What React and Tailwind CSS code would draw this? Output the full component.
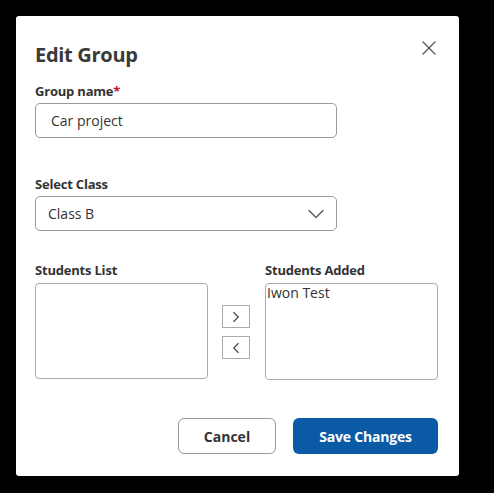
import { X, ChevronDown, ChevronRight, ChevronLeft } from 'lucide-react';

function Field({ label, required, children, className = '' }) {
  return (
    <div className={className}>
      <div className="text-[13px] leading-[16px] font-bold text-[#333] tracking-[-0.2px]">
        {label}
        {required && <span className="text-[#c8102e]">*</span>}
      </div>
      {children}
    </div>
  );
}

export default function App() {
  return (
    <div className="w-[494px] h-[493px] bg-black pt-4 pl-4 font-['Open_Sans',sans-serif]">
      <div className="relative flex flex-col w-[443px] h-[460px] bg-white rounded-[3px] px-[19px] pt-[27px] pb-[22px]">
        <h2 className="text-[20px] leading-[24px] font-bold text-[#3a3a3a] tracking-[-0.3px]">Edit Group</h2>
        <button className="absolute right-[18px] top-[20px] text-[#555]">
          <X size={24} strokeWidth={1.3} />
        </button>

        <Field label="Group name" required className="mt-[16px]">
          <div className="mt-[4px] w-[302px] h-[35px] flex items-center px-[15px] border border-[#999] rounded-[5px] text-[14px] text-[#333]">
            Car project
          </div>
        </Field>

        <Field label="Select Class" className="mt-[38px]">
          <div className="mt-[4px] w-[302px] h-[35px] flex items-center justify-between pl-[12px] pr-[6px] border border-[#999] rounded-[5px] text-[14px] text-[#333]">
            <span>Class B</span>
            <ChevronDown size={28} strokeWidth={1.1} className="text-[#555]" />
          </div>
        </Field>

        <div className="mt-[31px] flex items-start">
          <Field label="Students List" className="w-[173px]">
            <div className="mt-[5px] h-[96px] border border-[#aaa] rounded-[4px]" />
          </Field>
          <div className="flex flex-col gap-[8px] ml-[14px] mr-[15px] mt-[43px]">
            <button className="w-[28px] h-[23px] border border-[#aaa] flex items-center justify-center text-[#444]">
              <ChevronRight size={18} strokeWidth={1.5} />
            </button>
            <button className="w-[28px] h-[23px] border border-[#aaa] flex items-center justify-center text-[#444]">
              <ChevronLeft size={18} strokeWidth={1.5} />
            </button>
          </div>
          <Field label="Students Added" className="w-[173px]">
            <div className="mt-[5px] h-[97px] border border-[#aaa] rounded-[4px] px-[1px] text-[14px] leading-[18px] text-[#333]">
              Iwon Test
            </div>
          </Field>
        </div>

        <div className="mt-auto flex justify-end gap-[17px] pr-[2px]">
          <button className="w-[98px] h-[36px] border border-[#999] rounded-[6px] text-[14px] font-bold text-[#333]">
            Cancel
          </button>
          <button className="w-[145px] h-[36px] rounded-[6px] bg-[#0b5aa6] text-[14px] font-bold text-white tracking-[-0.2px]">
            Save Changes
          </button>
        </div>
      </div>
    </div>
  );
}
